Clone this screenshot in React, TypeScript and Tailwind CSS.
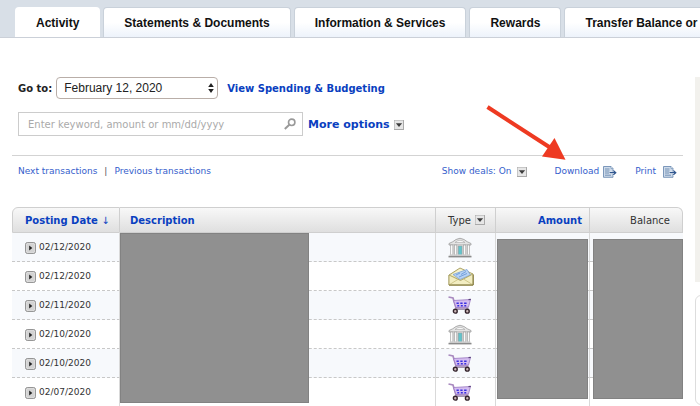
import React from "react";

const TABS = [
  "Activity",
  "Statements & Documents",
  "Information & Services",
  "Rewards",
  "Transfer Balance or",
];

type Kind = "bank" | "mail" | "cart";

const ROWS: { date: string; kind: Kind }[] = [
  { date: "02/12/2020", kind: "bank" },
  { date: "02/12/2020", kind: "mail" },
  { date: "02/11/2020", kind: "cart" },
  { date: "02/10/2020", kind: "bank" },
  { date: "02/10/2020", kind: "cart" },
  { date: "02/07/2020", kind: "cart" },
];

function BankIcon() {
  return (
    <svg viewBox="0 0 24 21" className="block h-[21px] w-6" role="img" aria-label="Bank">
      <path d="M1 6.5 Q5 5 8 2.5 Q12 0 16 2.5 Q19 5 23 6.5 V8 H1Z" fill="#e4e4e4" stroke="#9a9a9a" strokeWidth="0.8" />
      <path d="M7 5.5 Q12 1 17 5.5Z" fill="#f8f8f8" stroke="#aaa" strokeWidth="0.6" />
      <rect x="3" y="8" width="18" height="10" fill="#d6d6d6" />
      <rect x="10.2" y="9" width="3.8" height="9" fill="#62c4cc" stroke="#9a9a9a" strokeWidth="0.5" />
      <g fill="#fbfbfb" stroke="#9a9a9a" strokeWidth="0.6">
        <rect x="2.5" y="8" width="2.4" height="10" />
        <rect x="6.4" y="8" width="2.4" height="10" />
        <rect x="15.4" y="8" width="2.4" height="10" />
        <rect x="19.3" y="8" width="2.4" height="10" />
      </g>
      <rect x="1.5" y="17.5" width="21" height="1.4" fill="#d9d9d9" />
      <rect x="0.5" y="18.8" width="23" height="1.6" fill="#8b8b8b" />
    </svg>
  );
}

function MailIcon() {
  return (
    <svg viewBox="0 0 26 19" className="block h-[19px] w-[26px]" role="img" aria-label="Mail">
      <path d="M1 8 L12 1 L25 7 V18 H1Z" fill="#e9e2a8" stroke="#a39a5c" strokeWidth="0.9" />
      <path d="M3 8 L12 1.8 L23 7 L14 12Z" fill="#f6f2cf" />
      <path d="M5 7.5 L19 2.5 L22.5 8 L12 12.5Z" fill="#b7d2f4" stroke="#6f9ad6" strokeWidth="0.7" />
      <path d="M8 8 L12 6 M13 7.5 L18 4.5 M11 10 L19 6.5" stroke="#6a98d8" strokeWidth="0.9" />
      <path d="M1 8 L12.5 13.5 L25 7 V18 H1Z" fill="#f2edc2" stroke="#a39a5c" strokeWidth="0.8" />
      <path d="M1.2 17.8 L10 12.4 M24.8 17.8 L15.5 12" stroke="#c7bd7c" strokeWidth="0.8" />
      <path d="M1 18 H25.2 V8" fill="none" stroke="#857c43" strokeWidth="1" />
    </svg>
  );
}

function CartIcon() {
  return (
    <svg viewBox="0 0 24 18" className="block h-[18px] w-6" role="img" aria-label="Purchase">
      <path d="M0.5 1 L5 2 L8 12 H20.5" fill="none" stroke="#a98abf" strokeWidth="1.7" />
      <path d="M5.5 4.5 L22.5 3.5 L20.5 11 L8 11.5Z" fill="#d4bdf0" stroke="#9a78c0" strokeWidth="0.8" />
      <path d="M8.5 7.2 H10.8 M12.3 7.2 H14.6 M16.1 7.2 H18.6 M9.3 9.7 H11.2 M12.8 9.7 H14.8 M16.3 9.7 H18.2" stroke="#3a2fe0" strokeWidth="1.5" />
      <path d="M20.5 3.6 L22.8 3.3" stroke="#59417a" strokeWidth="1.2" />
      <path d="M7 13.3 H20.5" stroke="#8d7a9a" strokeWidth="1" />
      <circle cx="7.3" cy="15.2" r="1.9" fill="#cdb9b9" stroke="#33232b" strokeWidth="1.4" />
      <circle cx="19.3" cy="15.2" r="1.9" fill="#cdb9b9" stroke="#33232b" strokeWidth="1.4" />
    </svg>
  );
}

const ICONS = { bank: BankIcon, mail: MailIcon, cart: CartIcon };

function MenuBox() {
  return (
    <svg viewBox="0 0 10 10" className="block size-[10px] shrink-0" aria-hidden="true">
      <rect width="10" height="10" fill="#a9a9a9" />
      <rect x="0.5" y="0.5" width="8.5" height="8.5" fill="#e6e6e6" />
      <path d="M1.9 3.2 H8.1 L5 7Z" fill="#3c3c3c" />
    </svg>
  );
}

function ExportIcon() {
  return (
    <svg viewBox="0 0 14 12" className="block h-3 w-[14px] shrink-0" aria-hidden="true">
      <path d="M0.5 0.5 H8 L10 2.5 V11.3 H0.5Z" fill="#cfdbea" stroke="#6f8fb4" strokeWidth="0.9" />
      <path d="M8 0.5 V2.6 H10" fill="#f2f6fb" stroke="#6f8fb4" strokeWidth="0.7" />
      <path d="M2 3 H6.5 M2 5 H6.5 M2 7 H6.5 M2 9.2 H8" stroke="#6a8ab0" strokeWidth="0.9" />
      <path d="M6 5.7 H10 V3.4 L14 6.7 L10 10 V7.7 H6Z" fill="#fff" />
      <path d="M6.5 6.7 H12 M10.3 4.5 L12.8 6.7 L10.3 8.9" fill="none" stroke="#30578f" strokeWidth="1.2" />
    </svg>
  );
}

function ExpandButton({ date }: { date: string }) {
  return (
    <button type="button" aria-label={`Expand ${date}`} className="shrink-0">
      <svg viewBox="0 0 11 12" className="block h-3 w-[11px]" aria-hidden="true">
        <rect x="0.6" y="0.6" width="9.8" height="10.8" rx="1.6" fill="#e4e4e4" stroke="#8c8c8c" strokeWidth="1" />
        <rect x="2" y="2" width="7" height="8" fill="#d3d3d3" />
        <path d="M4.2 3.6 L7.3 6 L4.2 8.4Z" fill="#222" />
      </svg>
    </button>
  );
}

const HEAD =
  "h-[26px] border-y border-r border-[#cfcfcf] bg-linear-to-b from-[#f8f8f8] to-[#dfdfdf] p-0";

function Mask({ className }: { className: string }) {
  return <span aria-hidden="true" className={`absolute z-10 border border-[#828282] bg-[#909090] ${className}`} />;
}

export default function App() {
  return (
    <div className="relative overflow-hidden bg-white font-['DejaVu_Sans','Liberation_Sans',sans-serif] text-[10px] text-[#333]">
      <header className="overflow-hidden border-b border-[#cbd0d8] bg-[#d8dfe7] pt-[7px] pl-[15px]">
        <nav className="flex gap-[3px] font-['Liberation_Sans',sans-serif] text-xs font-bold whitespace-nowrap text-[#111]">
          {TABS.map((tab, i) => (
            <a
              key={tab}
              href="#"
              aria-current={i === 0 ? "page" : undefined}
              className={
                i === 0
                  ? "-mb-px flex h-[31px] shrink-0 items-center rounded-t bg-white px-[21px]"
                  : "flex h-[30px] shrink-0 items-center rounded-t border border-b-0 border-[#c9d1da] bg-linear-to-b from-white from-50% to-[#edf3fb] px-[20px]"
              }
            >
              {tab}
            </a>
          ))}
        </nav>
      </header>

      <div className="flex pt-[39px]">
        <main className="min-w-0 flex-1 pr-3 pl-3">
          <div className="flex h-[22px] items-center pl-1.5">
            <label htmlFor="goto" className="font-bold text-[#222]">
              Go to:
            </label>
            <div className="relative ml-1">
              <select
                id="goto"
                className="block h-[22px] w-[162px] appearance-none rounded border border-[#b9aea8] bg-white pl-[7px] font-['Liberation_Sans',sans-serif] text-xs text-[#222]"
              >
                <option>February 12, 2020</option>
              </select>
              <svg viewBox="0 0 6 10" className="pointer-events-none absolute top-[6px] right-1 h-[10px] w-1.5" aria-hidden="true">
                <path d="M3 0 L5.8 4 H0.2Z M0.2 6 H5.8 L3 10Z" fill="#222" />
              </svg>
            </div>
            <a href="#" className="ml-[9px] font-bold text-[#0a3fc0]">
              View Spending &amp; Budgeting
            </a>
          </div>

          <div className="mt-[13px] flex items-center pl-1.5">
            <div className="flex h-6 w-[285px] items-center border border-[#ccc] pr-1.5 pl-[9px]">
              <input
                type="text"
                aria-label="Search transactions"
                placeholder="Enter keyword, amount or mm/dd/yyyy"
                className="min-w-0 flex-1 outline-none placeholder:text-[#aaa]"
              />
              <svg viewBox="0 0 12 12" className="size-3" aria-hidden="true">
                <circle cx="7.7" cy="4.3" r="3.2" fill="none" stroke="#999" strokeWidth="1.6" />
                <path d="M5.3 6.8 L0.8 11" stroke="#999" strokeWidth="2" />
              </svg>
            </div>
            <button type="button" className="ml-[5px] flex items-center gap-1 pt-0.5 text-[11px] font-bold text-[#0a3fc0]">
              More options
              <MenuBox />
            </button>
          </div>

          <div className="mt-[19px] mb-5 flex h-8 items-center justify-between border-t border-[#d3d3d3] pr-1.5 pl-1.5 text-[9px] text-[#3560cc]">
            <div className="flex gap-[7px]">
              <a href="#">Next transactions</a>
              <span className="text-[#555]">|</span>
              <a href="#">Previous transactions</a>
            </div>
            <div className="flex items-center">
              <button type="button" className="flex items-center gap-[5px]">
                Show deals: On
                <MenuBox />
              </button>
              <a href="#" className="ml-[28px] flex items-center gap-1">
                Download
                <ExportIcon />
              </a>
              <a href="#" className="ml-[18px] flex items-center gap-[7px]">
                Print
                <ExportIcon />
              </a>
            </div>
          </div>

          <table className="w-full table-fixed border-separate border-spacing-0">
            <colgroup>
              <col className="w-[108px]" />
              <col />
              <col className="w-[60px]" />
              <col className="w-[94px]" />
              <col className="w-[93px]" />
            </colgroup>
            <thead>
              <tr>
                <th scope="col" className={`${HEAD} rounded-tl-md border-l pl-3 text-left`}>
                  <a href="#" className="font-bold text-[#0a3fc0]">
                    Posting Date <span className="font-normal">↓</span>
                  </a>
                </th>
                <th scope="col" className={`${HEAD} text-left`}>
                  <a href="#" className="pl-[10px] font-bold text-[#0a3fc0]">Description</a>
                </th>
                <th scope="col" className={`${HEAD} font-normal`}>
                  <button type="button" className="flex items-center gap-1 pl-3">
                    Type
                    <MenuBox />
                  </button>
                </th>
                <th scope="col" className={`${HEAD} text-right`}>
                  <a href="#" className="pr-[7px] font-bold text-[#0a3fc0]">Amount</a>
                </th>
                <th scope="col" className={`${HEAD} rounded-tr-md text-right font-normal`}>
                  <span className="pr-3">Balance</span>
                </th>
              </tr>
            </thead>
            <tbody>
              {ROWS.map((row, i) => {
                const Icon = ICONS[row.kind];
                const last = i === ROWS.length - 1;
                const line = last ? "h-7" : "h-[29px] border-b border-b-[#c8c8c8] [border-bottom-style:dashed]";
                const cell = `relative border-r border-r-[#d9d9d9] p-0 ${line}`;
                return (
                  <tr key={i} className={i % 2 === 0 && !last ? "bg-[#f7f9fc]" : "bg-white"}>
                    <td className={cell}>
                      <div className="flex items-center gap-[3px] pt-0.5 pl-[13px] text-[9px]">
                        <ExpandButton date={row.date} />
                        {row.date}
                      </div>
                    </td>
                    <td className={cell}>
                      {i === 0 && <Mask className="top-0 left-0 h-[170px] w-[189px]" />}
                    </td>
                    <td className={cell}>
                      <div className="pl-3">
                        <Icon />
                      </div>
                    </td>
                    <td className={cell}>
                      {i === 0 && <Mask className="top-[6px] right-[1px] left-[1px] h-[160px]" />}
                    </td>
                    <td className={`relative p-0 ${line}`}>
                      {i === 0 && <Mask className="top-[6px] right-0 left-[3px] h-[160px]" />}
                    </td>
                  </tr>
                );
              })}
            </tbody>
          </table>
        </main>

        <aside className="w-[5px] shrink-0 overflow-hidden" aria-hidden="true">
          <div className="h-[205px] bg-[#f2f1ed]" />
          <div className="mt-[13px] h-[110px] w-40 rounded-md border border-[#ddd]" />
        </aside>
      </div>

      <svg
        viewBox="0 0 80 56"
        className="pointer-events-none absolute top-[105px] left-[486px] h-14 w-20"
        aria-hidden="true"
      >
        <path d="M1.5 2 L64 42.5" stroke="#ee3a22" strokeWidth="4" />
        <path d="M79.5 54.8 L56 51.5 L68.5 33Z" fill="#ee3a22" />
      </svg>
    </div>
  );
}
